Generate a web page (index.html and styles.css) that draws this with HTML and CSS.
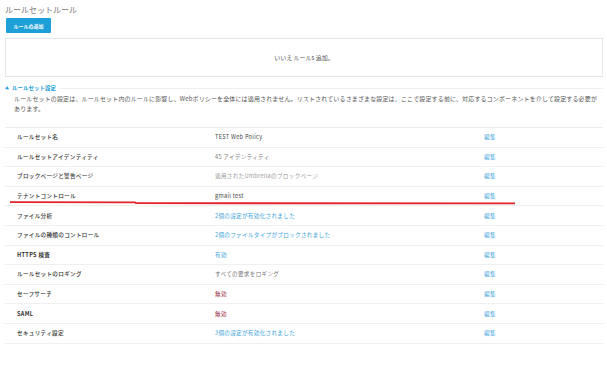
FILE: index.html
```html
<!DOCTYPE html>
<html lang="ja">
<head>
    <meta charset="UTF-8">
    <meta name="viewport" content="width=device-width, initial-scale=1.0">
    <title>ルールセットルール</title>
    <link rel="stylesheet" href="styles.css">
</head>
<body>
    <div class="page">
        <h1 class="title">ルールセットルール</h1>
        <button class="add-button">ルールの追加</button>
        <div class="empty-box">いいえ ルールs 追加。</div>

        <div class="section-head">
            <span class="arrow">▲</span>
            <span class="section-title">ルールセット設定</span>
            <span class="section-line"></span>
        </div>
        <p class="description">ルールセットの設定は、ルールセット内のルールに影響し、Webポリシーを全体には適用されません。リストされているさまざまな設定は、ここで設定する前に、対応するコンポーネントを介して設定する必要があります。</p>

        <div class="settings">
            <div class="row">
                <span class="label">ルールセット名</span>
                <span class="value dark">TEST Web Policy</span>
                <a class="edit">編集</a>
            </div>
            <div class="row">
                <span class="label">ルールセットアイデンティティ</span>
                <span class="value">45 アイデンティティ</span>
                <a class="edit">編集</a>
            </div>
            <div class="row">
                <span class="label">ブロックページと警告ページ</span>
                <span class="value light">適用されたUmbrellaのブロックページ</span>
                <a class="edit">編集</a>
            </div>
            <div class="row">
                <span class="label">テナントコントロール</span>
                <span class="value dark">gmail test</span>
                <a class="edit">編集</a>
            </div>
            <div class="row">
                <span class="label">ファイル分析</span>
                <span class="value blue">2個の設定が有効化されました</span>
                <a class="edit">編集</a>
            </div>
            <div class="row">
                <span class="label">ファイルの種類のコントロール</span>
                <span class="value blue">2個のファイルタイプがブロックされました</span>
                <a class="edit">編集</a>
            </div>
            <div class="row">
                <span class="label strong">HTTPS 検査</span>
                <span class="value blue">有効</span>
                <a class="edit">編集</a>
            </div>
            <div class="row">
                <span class="label">ルールセットのロギング</span>
                <span class="value">すべての要求をロギング</span>
                <a class="edit">編集</a>
            </div>
            <div class="row">
                <span class="label">セーフサーチ</span>
                <span class="value red">無効</span>
                <a class="edit">編集</a>
            </div>
            <div class="row">
                <span class="label strong">SAML</span>
                <span class="value red">無効</span>
                <a class="edit">編集</a>
            </div>
            <div class="row">
                <span class="label">セキュリティ設定</span>
                <span class="value blue">3個の設定が有効化されました</span>
                <a class="edit">編集</a>
            </div>
        </div>

        <!-- hand drawn red underline over the tenant row -->
        <svg class="marker" width="520" height="6" viewBox="0 0 520 6">
            <path d="M10 2.2 L135 2.4 L136 3.2 L515 3.4" stroke="#e3222b" stroke-width="1.8" fill="none"/>
        </svg>
    </div>
</body>
</html>
```

FILE: styles.css
```css
body {
    margin: 0;
    background-color: #ffffff;
    font-family: "Noto Sans CJK JP", "Noto Sans", sans-serif;
    color: #333333;
}

.page {
    position: relative;
    padding: 4px 4px 0 5px;
}

.title {
    margin: 0;
    font-size: 8px;
    font-weight: normal;
    line-height: 12px;
    color: #7a7a7a;
}

.add-button {
    display: block;
    margin: 2px 0 0 1px;
    width: 45px;
    height: 15px;
    padding: 0;
    border: none;
    border-radius: 1px;
    background-color: #1d9fd8;
    color: #ffffff;
    font-family: inherit;
    font-size: 5px;
    font-weight: bold;
}

.empty-box {
    margin-top: 5px;
    height: 37px;
    border: 1px solid #e6e6e6;
    display: flex;
    justify-content: center;
    align-items: center;
    font-size: 6px;
    color: #555555;
}

.section-head {
    display: flex;
    align-items: center;
    margin-top: 6px;
    height: 10px;
}

.arrow {
    font-size: 4px;
    color: #1d9fd8;
    margin-right: 3px;
}

.section-title {
    font-size: 5.5px;
    font-weight: bold;
    color: #1d9fd8;
}

.section-line {
    flex: 1;
    height: 1px;
    margin-left: 4px;
    background-color: #eeeeee;
}

.description {
    margin: 1px 4px 0 9px;
    font-size: 6px;
    line-height: 10px;
    color: #555555;
    letter-spacing: 0.14px;
}

.settings {
    margin-top: 13px;
    border-top: 1px solid #ececec;
}

.row {
    display: grid;
    grid-template-columns: 198px 269px 1fr;
    align-items: center;
    height: 18.6px;
    padding-left: 12px;
    border-bottom: 1px solid #f0f0f0;
    font-size: 5.6px;
    letter-spacing: 0.3px;
}

.label {
    color: #333333;
    font-weight: 500;
}

.label.strong {
    font-weight: bold;
}

.value {
    color: #777777;
}

.value.dark {
    color: #444444;
}

.value.light {
    color: #999999;
}

.value.blue {
    color: #3aa3dc;
}

.value.red {
    color: #9a2a3c;
}

.edit {
    color: #3aa3dc;
    cursor: pointer;
}

.marker {
    position: absolute;
    left: 0;
    top: 200px;
}
```
